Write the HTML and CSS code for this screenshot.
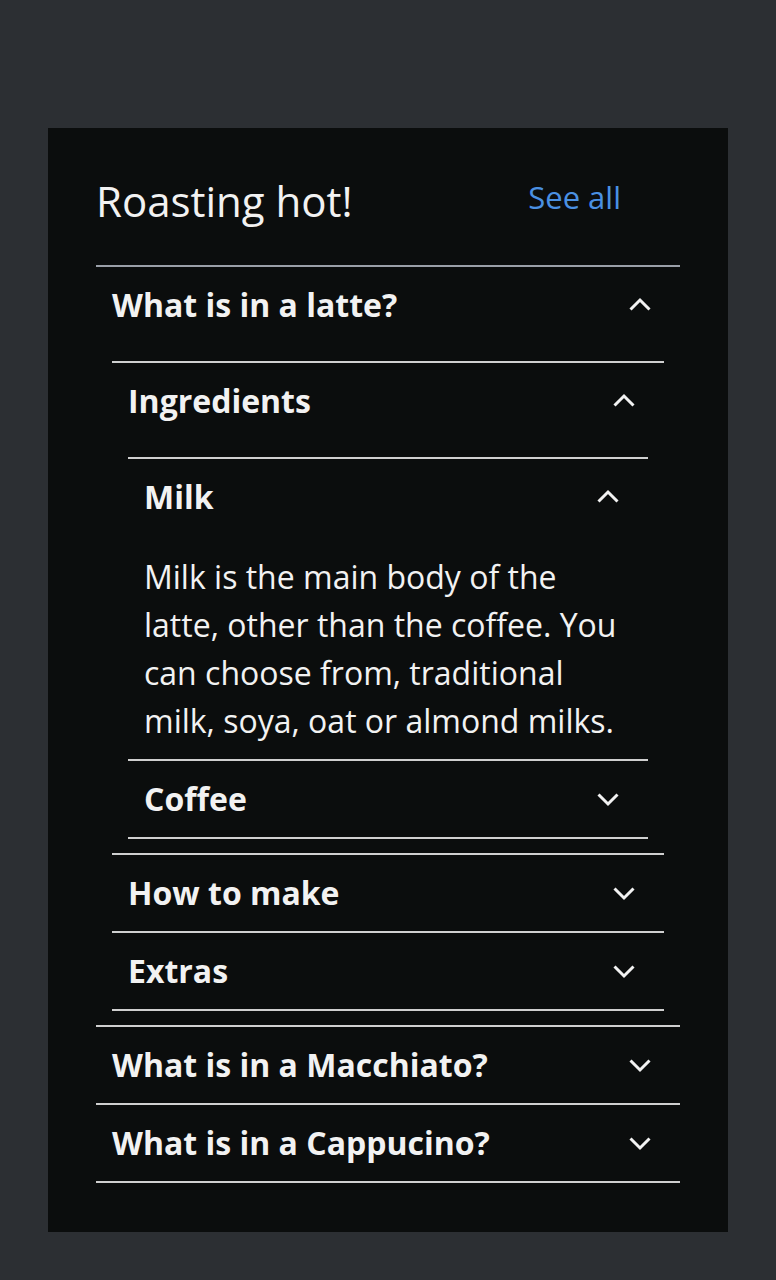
FILE: index.html
```html
<!DOCTYPE html>
<html lang="en">
<head>
<meta charset="utf-8">
<title>Roasting hot!</title>
<link rel="stylesheet" href="styles.css">
</head>
<body>
<main class="page">
  <section class="card">
    <header class="card-head">
      <h2 class="title">Roasting hot!</h2>
      <a class="see-all" href="#">See all</a>
    </header>
    <div class="acc">
      <div class="item">
        <div class="row"><span class="label">What is in a latte?</span><svg class="chev" viewBox="0 0 24 24"><polyline points="2.5,16.5 12,7 21.5,16.5"/></svg></div>
        <div class="panel">
          <div class="acc nested">
            <div class="item">
              <div class="row"><span class="label">Ingredients</span><svg class="chev" viewBox="0 0 24 24"><polyline points="2.5,16.5 12,7 21.5,16.5"/></svg></div>
              <div class="panel">
                <div class="acc nested">
                  <div class="item">
                    <div class="row"><span class="label">Milk</span><svg class="chev" viewBox="0 0 24 24"><polyline points="2.5,16.5 12,7 21.5,16.5"/></svg></div>
                    <div class="panel">
                      <p class="text">Milk is the main body of the latte, other than the coffee. You can choose from, traditional milk, soya, oat or almond milks.</p>
                    </div>
                  </div>
                  <div class="item">
                    <div class="row"><span class="label">Coffee</span><svg class="chev" viewBox="0 0 24 24"><polyline points="2.5,7.5 12,17 21.5,7.5"/></svg></div>
                  </div>
                </div>
              </div>
            </div>
            <div class="item">
              <div class="row"><span class="label">How to make</span><svg class="chev" viewBox="0 0 24 24"><polyline points="2.5,7.5 12,17 21.5,7.5"/></svg></div>
            </div>
            <div class="item">
              <div class="row"><span class="label">Extras</span><svg class="chev" viewBox="0 0 24 24"><polyline points="2.5,7.5 12,17 21.5,7.5"/></svg></div>
            </div>
          </div>
        </div>
      </div>
      <div class="item">
        <div class="row"><span class="label">What is in a Macchiato?</span><svg class="chev" viewBox="0 0 24 24"><polyline points="2.5,7.5 12,17 21.5,7.5"/></svg></div>
      </div>
      <div class="item">
        <div class="row"><span class="label">What is in a Cappucino?</span><svg class="chev" viewBox="0 0 24 24"><polyline points="2.5,7.5 12,17 21.5,7.5"/></svg></div>
      </div>
    </div>
  </section>
</main>
</body>
</html>
```
FILE: styles.css
```css
html, body {
  margin: 0;
  padding: 0;
  background: #2c2f33;
}
body {
  font-family: "Open Sans", "Noto Sans", sans-serif;
  color: #f2f2f2;
}
.page {
  padding: 128px 48px 48px;
}
.card {
  background: #0b0d0d;
  padding: 48px 48px 49px;
}
.card-head {
  display: flex;
  justify-content: space-between;
  align-items: flex-start;
  padding-bottom: 39px;
  border-bottom: 2px solid #9a9fa8;
}
.title {
  margin: 0;
  font-size: 42px;
  font-weight: 400;
  line-height: 50px;
}
.see-all {
  font-size: 31px;
  color: #4a90e2;
  text-decoration: none;
  margin-right: 59px;
}
.acc.nested {
  border-top: 2px solid #cfcfcf;
}
.item {
  border-bottom: 2px solid #cfcfcf;
}
.row {
  display: flex;
  align-items: center;
  justify-content: space-between;
  padding: 16px 28px 16px 16px;
  height: 44px;
}
.label {
  font-size: 32px;
  font-weight: 700;
  line-height: 44px;
}
.chev {
  width: 24px;
  height: 24px;
  fill: none;
  stroke: #f2f2f2;
  stroke-width: 3;
}
.panel {
  padding: 18px 16px 14px;
}
.text {
  margin: 0;
  font-size: 32px;
  line-height: 48px;
}
```
